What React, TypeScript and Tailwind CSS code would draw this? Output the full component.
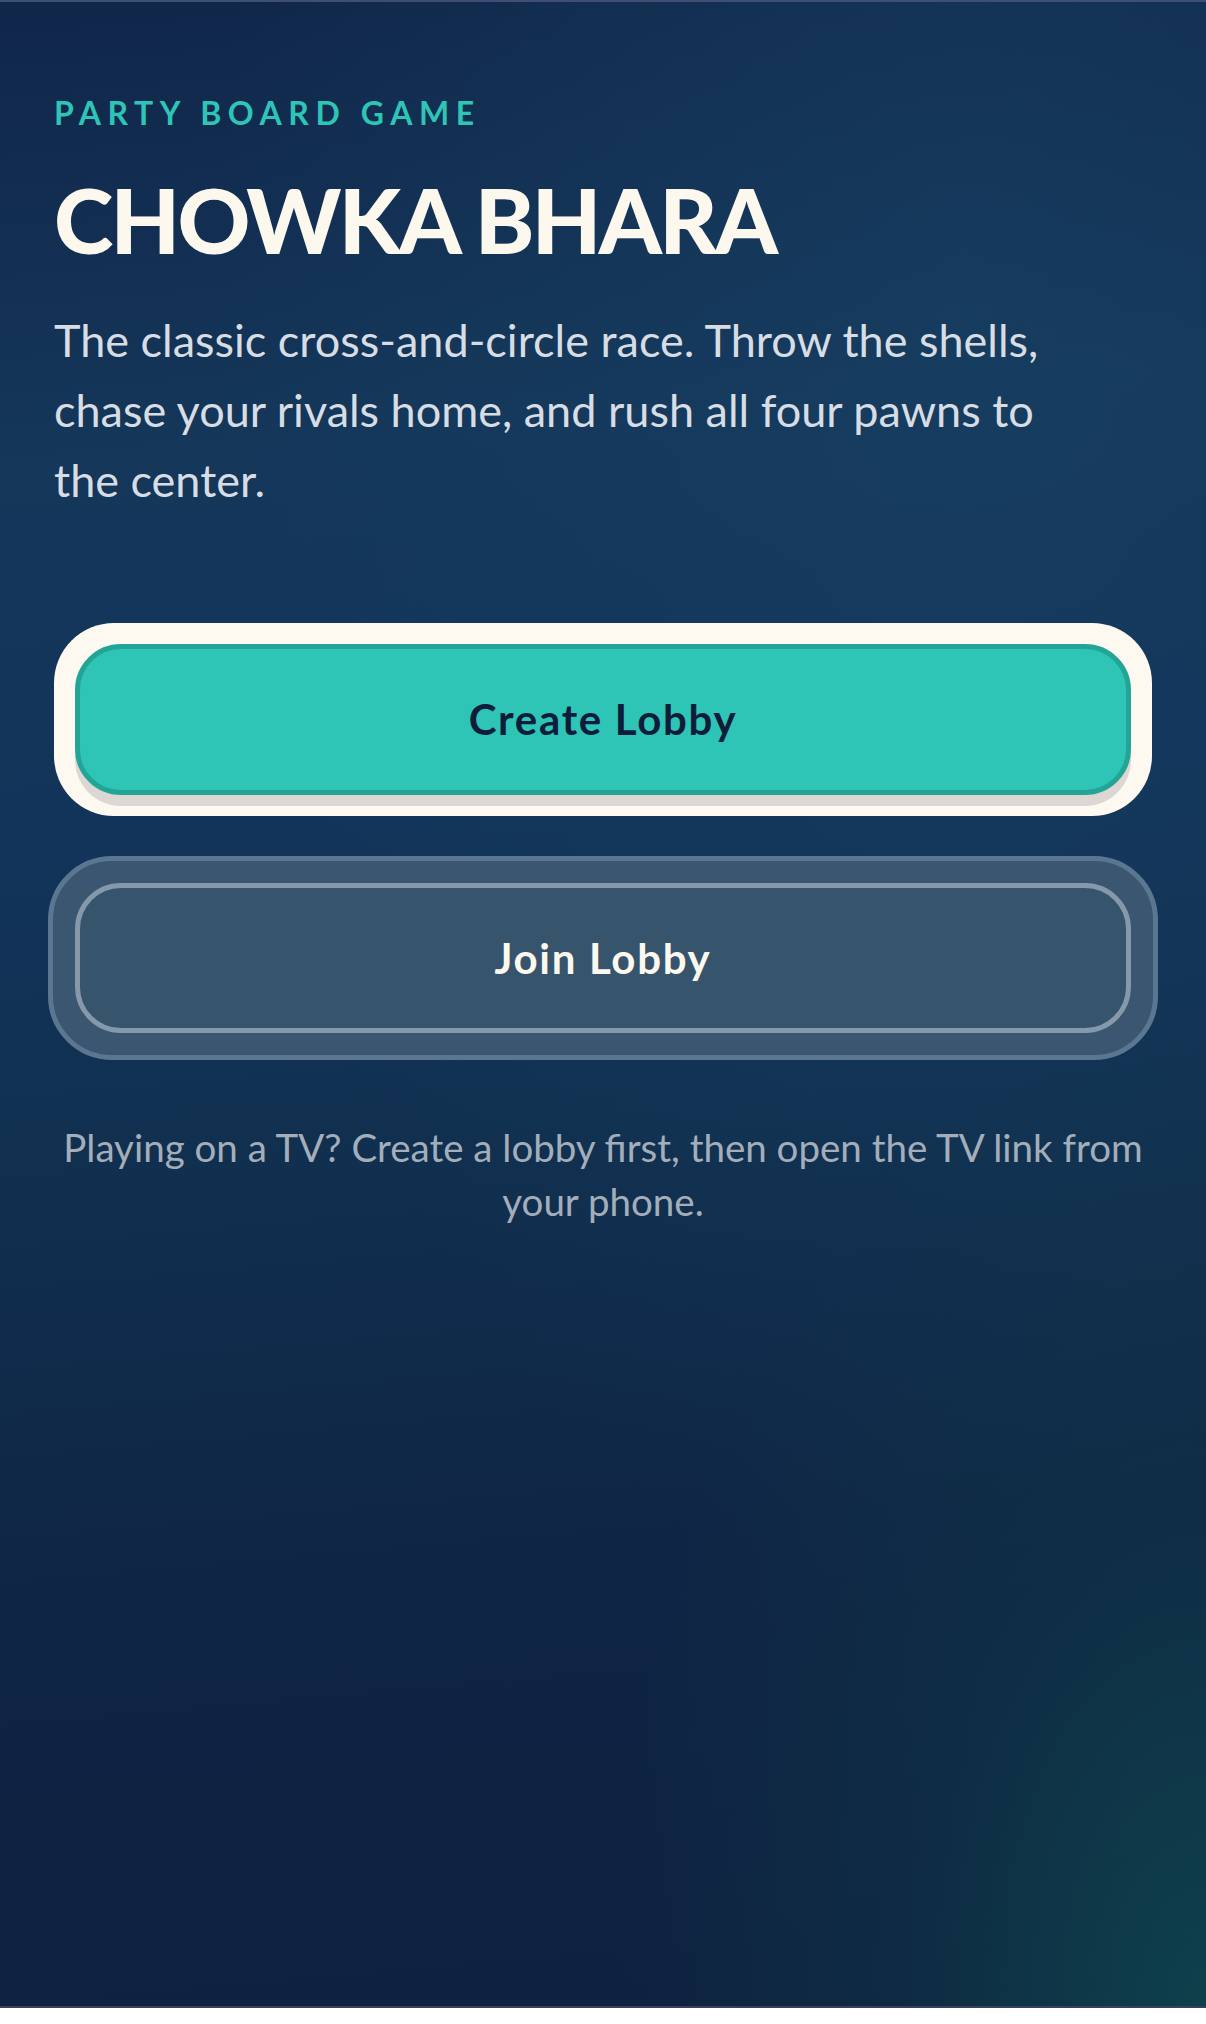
import React from "react";

export default function App() {
  return (
    <div className="w-full bg-[#ebebf0]">
      <main
        className="relative h-[2008px] w-full overflow-hidden border-t-2 border-b-2 border-t-[#3f4f72] border-b-[#3a3f5a] bg-[radial-gradient(ellipse_at_100%_100%,rgba(14,70,78,0.85)_0%,rgba(14,60,72,0.35)_18%,transparent_35%),radial-gradient(ellipse_at_80%_15%,rgba(24,66,100,0.5)_0%,transparent_55%),linear-gradient(175deg,#10264a_0%,#14375a_22%,#12345a_40%,#113050_55%,#0f2545_75%,#0e2140_100%)] px-[54px] pt-[91px] [font-family:Lato,'Noto_Sans',sans-serif]"
      >
        <p className="text-[32px] font-bold uppercase leading-[40px] tracking-[0.205em] text-[#2ec4b6]">
          Party Board Game
        </p>
        <h1 className="mt-[36px] text-[90px] font-black uppercase leading-[100px] tracking-[-0.03em] text-[#fdf8ee]">
          Chowka Bhara
        </h1>
        <p className="mt-[36px] max-w-[1080px] text-[45px] font-normal leading-[70px] text-[#d8dde4]">
          The classic cross-and-circle race. Throw the shells,
          <br />
          chase your rivals home, and rush all four pawns to
          <br />
          the center.
        </p>

        <div className="mt-[108px] flex flex-col gap-[40px]">
          <div className="rounded-[60px] bg-[#fdf9f0] px-[21px] pb-[21px] pt-[21px]">
            <button className="flex h-[151px] w-full items-center justify-center rounded-[46px] border-[5px] border-[#22a596] bg-[#2ec4b6] text-[42px] font-bold tracking-[0.04em] text-[#0f1d3a] shadow-[0_11px_0_#dcd7d3]">
              Create Lobby
            </button>
          </div>

          <div className="-mx-[6px] rounded-[64px] border-[5px] border-[#5b7690] bg-[#3a5670] p-[22px]">
            <button className="flex h-[150px] w-full items-center justify-center rounded-[46px] border-[5px] border-[#8699aa] bg-[#37546d] text-[42px] font-bold tracking-[0.04em] text-[#fdf8ee]">
              Join Lobby
            </button>
          </div>
        </div>

        <p className="mx-auto mt-[60px] text-center text-[38.5px] leading-[54px] text-[#a4aeba]">
          Playing on a TV? Create a lobby first, then open the TV link from your phone.
        </p>
      </main>
    </div>
  );
}
